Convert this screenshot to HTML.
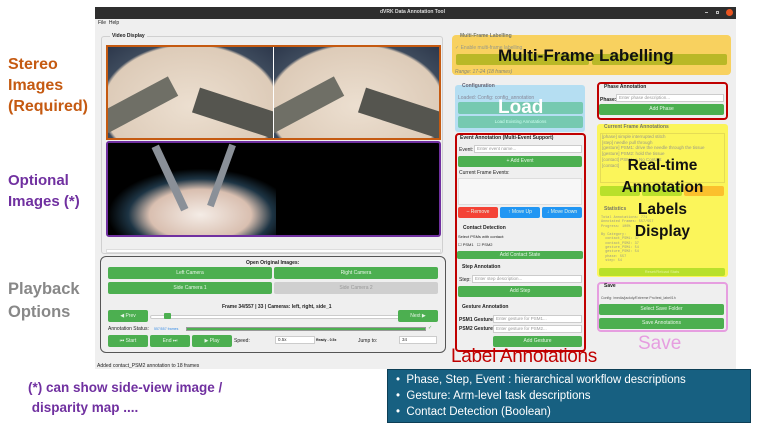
<!DOCTYPE html>
<html><head><meta charset="utf-8"><style>
*{margin:0;padding:0;box-sizing:border-box}
body{width:761px;height:429px;background:#fff;position:relative;overflow:hidden;font-family:"Liberation Sans",sans-serif}
.a{position:absolute}
.btn{position:absolute;background:#4caf50;color:#e8f5e8;font-size:5px;text-align:center;border-radius:2px}
.t{position:absolute;font-size:5px;color:#222}
.inp{position:absolute;background:#fff;border:1px solid #ccc;font-size:4.5px;color:#999;padding-left:2px}
.grp{position:absolute;border:1px solid #d0d0d0;border-radius:3px}
.lab{position:absolute;font-weight:bold;text-align:left;line-height:1.3}
.st{position:absolute;top:0;width:165px;height:91px;overflow:hidden;background:radial-gradient(ellipse 75% 95% at 50% 65%,#ecdfd0 0%,#ddcbb8 70%,#3d4a5c 73%,#2a3448 100%)}
</style></head><body>
<div class="a" style="left:95px;top:7px;width:641px;height:362px;background:#efefef"></div>
<div class="a" style="left:95px;top:7px;width:641px;height:12px;background:#2e2e2e"></div>
<div class="t" style="left:380px;top:9px;color:#ddd;font-weight:bold;font-size:5px">dVRK Data Annotation Tool</div>
<div class="a" style="left:705px;top:12px;width:3px;height:1px;background:#bbb"></div>
<div class="a" style="left:716px;top:11px;width:3px;height:3px;border:1px solid #bbb"></div>
<div class="a" style="left:726px;top:9px;width:7px;height:7px;border-radius:50%;background:#e95420"></div>
<div class="t" style="left:98px;top:20px">File&nbsp; Help</div>
<div class="grp" style="left:101px;top:36px;width:342px;height:218px"></div>
<div class="t" style="left:110px;top:33px;background:#efefef;font-weight:bold;padding:0 2px">Video Display</div>
<div class="a" style="left:106px;top:45px;width:335px;height:95px;border:2px solid #c55a11;background:#fff">
 <div class="st" style="left:0">
  <div class="a" style="left:-10px;top:68px;width:85px;height:22px;background:#6f6f66;transform:rotate(-28deg);transform-origin:left"></div>
  <div class="a" style="left:88px;top:40px;width:90px;height:26px;background:#55554f;transform:rotate(18deg);transform-origin:left"></div>
 </div>
 <div class="st" style="left:166px">
  <div class="a" style="left:-10px;top:68px;width:85px;height:22px;background:#6f6f66;transform:rotate(-28deg);transform-origin:left"></div>
  <div class="a" style="left:88px;top:40px;width:90px;height:26px;background:#55554f;transform:rotate(18deg);transform-origin:left"></div>
 </div>
</div>
<div class="a" style="left:106px;top:141px;width:335px;height:96px;border:2px solid #7030a0;border-radius:3px;background:#000;overflow:hidden">
 <div class="a" style="left:0;top:0;width:168px;height:92px;background:radial-gradient(ellipse 55% 50% at 55% 78%,#f4ece6 0%,#d9bfb0 55%,#1d3444 78%,#000 100%)"></div>
 <div class="a" style="left:58px;top:0;width:8px;height:70px;background:#8a9098;transform:rotate(-25deg)"></div>
 <div class="a" style="left:110px;top:0;width:7px;height:65px;background:#8a9098;transform:rotate(20deg)"></div>
</div>
<div class="a" style="left:106px;top:249px;width:335px;height:4px;background:#fff;border:1px solid #ddd"></div>
<div class="a" style="left:100px;top:256px;width:346px;height:97px;border:1.5px solid #555;border-radius:6px"></div>
<div class="t" style="left:246px;top:260px;font-weight:bold;font-size:5px">Open Original Images:</div>
<div class="btn" style="left:108px;top:267px;width:164px;height:12px;line-height:12px">Left Camera</div>
<div class="btn" style="left:274px;top:267px;width:164px;height:12px;line-height:12px">Right Camera</div>
<div class="btn" style="left:108px;top:282px;width:164px;height:12px;line-height:12px">Side Camera 1</div>
<div class="btn" style="left:274px;top:282px;width:164px;height:12px;line-height:12px;background:#cfcfcf;color:#999">Side Camera 2</div>
<div class="t" style="left:222px;top:304px;font-weight:bold">Frame 34/557 | 33 | Cameras: left, right, side_1</div>
<div class="btn" style="left:108px;top:310px;width:40px;height:12px;line-height:12px">◀ Prev</div>
<div class="a" style="left:150px;top:315px;width:250px;height:4px;background:#fff;border:1px solid #ccc;border-radius:2px"></div>
<div class="a" style="left:164px;top:313px;width:7px;height:6px;background:#4caf50;border-radius:1px"></div>
<div class="btn" style="left:398px;top:310px;width:40px;height:12px;line-height:12px">Next ▶</div>
<div class="t" style="left:108px;top:326px">Annotation Status:</div>
<div class="t" style="left:154px;top:327px;color:#3a8ee6;font-size:3.5px">557/557 frames</div>
<div class="a" style="left:186px;top:327px;width:240px;height:4px;background:#4caf50;border:1px solid #999"></div>
<div class="t" style="left:428px;top:325px;color:#4caf50">✓</div>
<div class="btn" style="left:108px;top:335px;width:40px;height:12px;line-height:12px">⏮ Start</div>
<div class="btn" style="left:150px;top:335px;width:40px;height:12px;line-height:12px">End ⏭</div>
<div class="btn" style="left:192px;top:335px;width:40px;height:12px;line-height:12px">▶ Play</div>
<div class="t" style="left:234px;top:338px">Speed:</div>
<div class="inp" style="left:275px;top:336px;width:40px;height:8px;color:#333">0.5x</div>
<div class="t" style="left:316px;top:338px;font-size:3.5px;font-weight:bold">Ready - 0.5x</div>
<div class="t" style="left:358px;top:338px">Jump to:</div>
<div class="inp" style="left:399px;top:336px;width:38px;height:8px;color:#333">34</div>
<div class="t" style="left:97px;top:363px">Added contact_PSM2 annotation to 18 frames</div>
<div class="a" style="left:452px;top:35px;width:279px;height:40px;background:#f8d15f;border-radius:4px"></div>
<div class="t" style="left:460px;top:33px;font-weight:bold;color:#776">Multi-Frame Labelling</div>
<div class="t" style="left:455px;top:45px;color:#998">✓ Enable multi-frame labelling</div>
<div class="a" style="left:456px;top:54px;width:133px;height:11px;background:#b9b827;border-radius:2px"></div>
<div class="a" style="left:592px;top:54px;width:135px;height:11px;background:#b9b827;border-radius:2px"></div>
<div class="t" style="left:455px;top:69px;font-style:italic;color:#887">Range: 17-24 (18 frames)</div>
<div class="lab" style="left:498px;top:45px;font-size:17px;color:#111">Multi-Frame Labelling</div>
<div class="a" style="left:455px;top:85px;width:130px;height:47px;background:#b5def2;border-radius:3px"></div>
<div class="t" style="left:462px;top:83px;font-weight:bold;color:#667">Configuration</div>
<div class="t" style="left:458px;top:95px;color:#889">Loaded: Config: config_annotation</div>
<div class="a" style="left:458px;top:102px;width:125px;height:12px;background:#76c9b0;border-radius:2px"></div>
<div class="a" style="left:458px;top:116px;width:125px;height:12px;background:#76c9b0;border-radius:2px;font-size:4.5px;color:#cfe;text-align:center;line-height:12px">Load Existing Annotations</div>
<div class="lab" style="left:498px;top:96px;font-size:19px;color:#fff">Load</div>
<div class="a" style="left:455px;top:133px;width:131px;height:219px;border:2px solid #c00000;border-radius:4px"></div>
<div class="t" style="left:460px;top:135px;font-weight:bold">Event Annotation (Multi-Event Support)</div>
<div class="t" style="left:459px;top:147px">Event:</div>
<div class="inp" style="left:474px;top:145px;width:108px;height:8px">Enter event name...</div>
<div class="btn" style="left:458px;top:156px;width:124px;height:11px;line-height:11px">+ Add Event</div>
<div class="t" style="left:459px;top:170px">Current Frame Events:</div>
<div class="a" style="left:458px;top:178px;width:124px;height:27px;background:#f7f7f7;border:1px solid #ddd"></div>
<div class="btn" style="left:458px;top:207px;width:40px;height:11px;line-height:11px;background:#f44336">– Remove</div>
<div class="btn" style="left:500px;top:207px;width:40px;height:11px;line-height:11px;background:#2196f3">↑ Move Up</div>
<div class="btn" style="left:542px;top:207px;width:40px;height:11px;line-height:11px;background:#2196f3">↓ Move Down</div>
<div class="t" style="left:463px;top:225px;font-weight:bold">Contact Detection</div>
<div class="t" style="left:458px;top:234px;font-size:4px">Select PSMs with contact:</div>
<div class="t" style="left:458px;top:242px;font-size:4px">☐ PSM1 &nbsp; ☐ PSM2</div>
<div class="btn" style="left:457px;top:251px;width:126px;height:8px;line-height:8px">Add Contact State</div>
<div class="t" style="left:462px;top:264px;font-weight:bold">Step Annotation</div>
<div class="t" style="left:459px;top:277px">Step:</div>
<div class="inp" style="left:472px;top:275px;width:110px;height:8px">Enter step description...</div>
<div class="btn" style="left:458px;top:286px;width:124px;height:11px;line-height:11px">Add Step</div>
<div class="t" style="left:462px;top:304px;font-weight:bold">Gesture Annotation</div>
<div class="t" style="left:459px;top:317px;font-weight:bold">PSM1 Gesture:</div>
<div class="inp" style="left:493px;top:315px;width:89px;height:8px">Enter gesture for PSM1...</div>
<div class="t" style="left:459px;top:326px;font-weight:bold">PSM2 Gesture:</div>
<div class="inp" style="left:493px;top:325px;width:89px;height:8px">Enter gesture for PSM2...</div>
<div class="btn" style="left:493px;top:336px;width:89px;height:11px;line-height:11px">Add Gesture</div>
<div class="a" style="left:597px;top:82px;width:131px;height:38px;border:2px solid #c00000;border-radius:4px"></div>
<div class="t" style="left:604px;top:84px;font-weight:bold">Phase Annotation</div>
<div class="t" style="left:600px;top:97px;font-weight:bold">Phase:</div>
<div class="inp" style="left:616px;top:94px;width:108px;height:8px">Enter phase description...</div>
<div class="btn" style="left:599px;top:104px;width:125px;height:11px;line-height:11px">Add Phase</div>
<div class="a" style="left:597px;top:124px;width:131px;height:153px;background:#fbf55a;border-radius:3px"></div>
<div class="t" style="left:604px;top:124px;font-weight:bold;color:#776">Current Frame Annotations</div>
<div class="a" style="left:600px;top:133px;width:125px;height:50px;border:1px solid #e5dc55;font-size:4.5px;color:#998;line-height:5.7px;padding-left:1px">[phase] simple interrupted stitch<br>[step] needle pull through<br>[gesture] PSM1: drive the needle through the tissue<br>[gesture] PSM2: hold the tissue<br>[contact] PSM1: ○ No Contact<br>[contact]</div>
<div class="a" style="left:600px;top:186px;width:40px;height:10px;background:#b9e02b;border-radius:2px"></div>
<div class="a" style="left:642px;top:186px;width:40px;height:10px;background:#b9e02b;border-radius:2px"></div>
<div class="a" style="left:684px;top:186px;width:40px;height:10px;background:#fbc02d;border-radius:2px"></div>
<div class="t" style="left:604px;top:206px;font-weight:bold;color:#776">Statistics</div>
<div class="a" style="left:601px;top:216px;font-family:'Liberation Mono',monospace;font-size:3.5px;color:#998;line-height:4.3px;white-space:pre">Total Annotations: 771
Annotated Frames: 557/557
Progress: 100%

By Category:
  contact_PSM1: 37
  contact_PSM2: 37
  gesture_PSM1: 54
  gesture_PSM2: 54
  phase: 557
  step: 54</div>
<div class="a" style="left:599px;top:268px;width:126px;height:8px;background:#b9e02b;border-radius:2px;font-size:4px;color:#e5f59a;text-align:center;line-height:8px">Reset/Reload Stats</div>
<div class="lab" style="left:597px;top:155px;width:131px;text-align:center;font-size:15.5px;color:#111;line-height:22px">Real-time<br>Annotation<br>Labels<br>Display</div>
<div class="a" style="left:597px;top:282px;width:131px;height:50px;border:2px solid #e69ee0;border-radius:4px"></div>
<div class="t" style="left:604px;top:283px;font-weight:bold">Save</div>
<div class="t" style="left:601px;top:296px;font-size:3.5px;color:#555">Config: /media/jackdy/Extreme Pro/test_label/1h</div>
<div class="btn" style="left:599px;top:304px;width:125px;height:11px;line-height:11px">Select Save Folder</div>
<div class="btn" style="left:599px;top:318px;width:125px;height:11px;line-height:11px">Save Annotations</div>
<div class="a" style="left:638px;top:333px;font-size:19px;color:#e69ee0">Save</div>
<div class="a" style="left:451px;top:346px;font-size:19px;color:#c00000;line-height:22px;letter-spacing:-0.3px">Label Annotations</div>
<div class="a" style="left:387px;top:369px;width:364px;height:54px;background:#176081;border:1px solid #0d3e55;color:#fff;font-size:11.5px;line-height:16px;padding:2px 0 0 8px">
• &nbsp;Phase, Step, Event : hierarchical workflow descriptions<br>• &nbsp;Gesture: Arm-level task descriptions<br>• &nbsp;Contact Detection (Boolean)</div>
<div class="lab" style="left:8px;top:54px;font-size:16px;color:#c55a11;line-height:21px">Stereo<br>Images<br>(Required)</div>
<div class="lab" style="left:8px;top:170px;font-size:15px;color:#7030a0;line-height:21px">Optional<br>Images (*)</div>
<div class="lab" style="left:8px;top:278px;font-size:16.5px;color:#888;line-height:23px">Playback<br>Options</div>
<div class="lab" style="left:28px;top:378px;font-size:13.5px;color:#7030a0;line-height:20px">(*) can show side-view image /<br>&nbsp;disparity map ....</div>
</body></html>
